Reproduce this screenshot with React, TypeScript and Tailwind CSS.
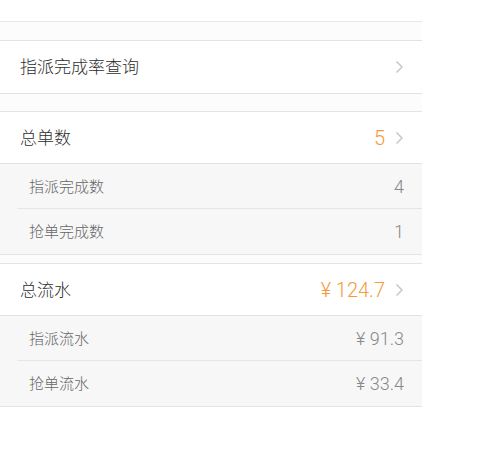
const Chevron = () => (
  <svg width="9" height="14" viewBox="0 0 9 14" className="ml-[10px]">
    <path d="M1.5 1.5 L7 7 L1.5 12.5" fill="none" stroke="#c7c7cc" strokeWidth="1.5" />
  </svg>
);

type SubRow = { label: string; value: string };

const Group = ({
  title,
  value,
  rows,
}: {
  title: string;
  value: string;
  rows: SubRow[];
}) => (
  <div className="border-t border-b border-[#e3e3e3]">
    <div className="flex h-[52px] items-center justify-between bg-white pl-[20px] pr-[18px] border-b border-[#e3e3e3]">
      <span className="text-[17px] font-light text-[#2e2e2e] -translate-y-px">{title}</span>
      <div className="flex items-center">
        <span className="text-[20px] font-light text-[#f39b3b] font-['Roboto',sans-serif]">{value}</span>
        <Chevron />
      </div>
    </div>
    {rows.map((r, i) => (
      <div key={r.label} className="bg-[#f7f7f7] pl-[17px]">
        <div
          className={`flex h-[45px] items-center justify-between pl-[12px] pr-[18px] ${
            i < rows.length - 1 ? "border-b border-[#e6e6e6]" : ""
          }`}
        >
          <span className="text-[15px] font-light text-[#666]">{r.label}</span>
          <span className="text-[18px] font-light text-[#888] font-['Roboto',sans-serif]">{r.value}</span>
        </div>
      </div>
    ))}
  </div>
);

export default function App() {
  return (
    <div className="h-[469px] w-[493px] bg-white font-['Noto_Sans_CJK_SC',sans-serif]">
      <div className="w-[422px] bg-[#fcfcfc]">
        <div className="h-[22px] bg-white border-b border-[#e6e6e6]" />
        <div className="h-[18px]" />
        <div className="flex h-[54px] items-center justify-between bg-white pl-[20px] pr-[18px] border-t border-b border-[#e3e3e3]">
          <span className="text-[17px] font-light text-[#2e2e2e] -translate-y-px">指派完成率查询</span>
          <Chevron />
        </div>
        <div className="h-[17px]" />
        <Group
          title="总单数"
          value="5"
          rows={[
            { label: "指派完成数", value: "4" },
            { label: "抢单完成数", value: "1" },
          ]}
        />
        <div className="h-[8px]" />
        <Group
          title="总流水"
          value="¥ 124.7"
          rows={[
            { label: "指派流水", value: "¥ 91.3" },
            { label: "抢单流水", value: "¥ 33.4" },
          ]}
        />
      </div>
    </div>
  );
}
